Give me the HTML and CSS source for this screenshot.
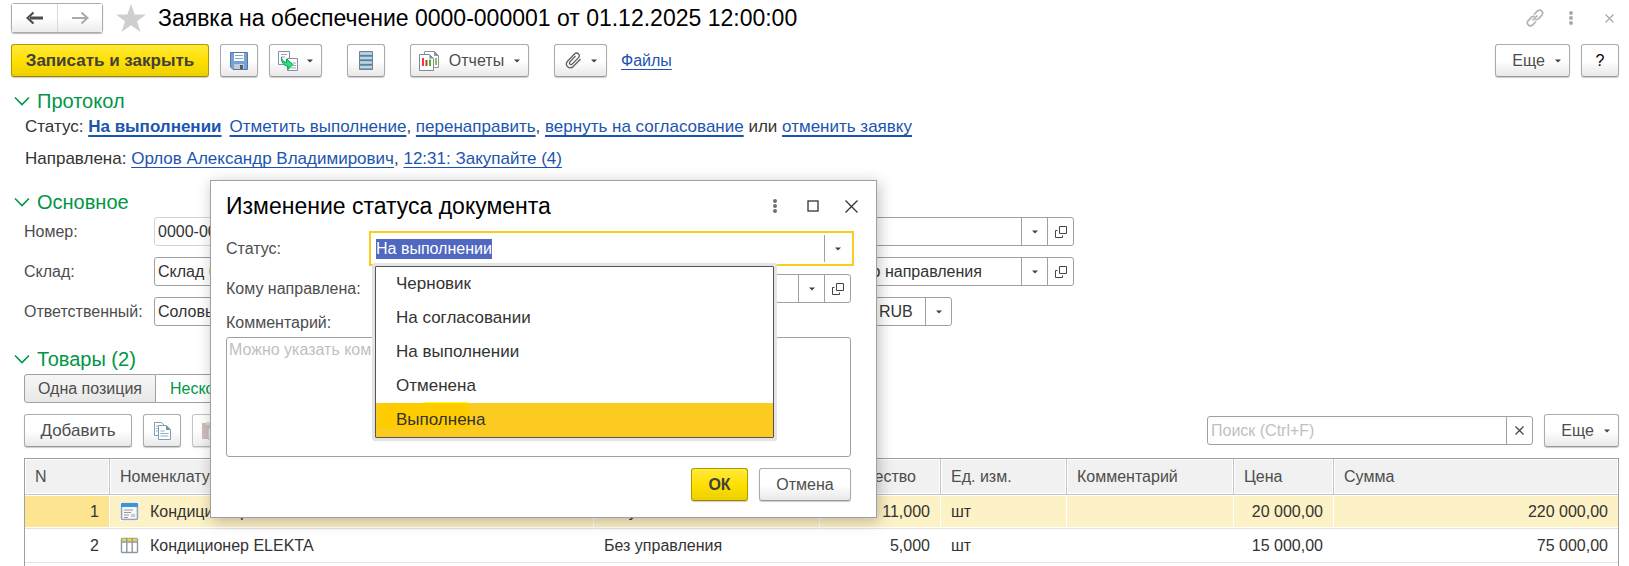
FILE: index.html
```html
<!DOCTYPE html>
<html lang="ru">
<head>
<meta charset="utf-8">
<title>Заявка на обеспечение</title>
<link rel="stylesheet" href="styles.css">
</head>
<body>
<svg class="sprite" aria-hidden="true">
  <symbol id="caret" viewBox="0 0 6 4"><path d="M0 0.5h6L3 3.5z" fill="#404040"/></symbol>
  <symbol id="open" viewBox="0 0 14 14"><path d="M5.5 1.5h7v7h-7zM3.5 5.5h-2v7h7v-2" fill="none" stroke="#444" stroke-width="1"/></symbol>
  <symbol id="chev" viewBox="0 0 16 10"><path d="M1 1.5l7 7 7-7" fill="none" stroke="#009646" stroke-width="1.6"/></symbol>
  <symbol id="dots" viewBox="0 0 4 14"><g fill="currentColor"><circle cx="2" cy="2" r="2"/><circle cx="2" cy="7" r="2"/><circle cx="2" cy="12" r="2"/></g></symbol>
</svg>
<main class="page">
  <header class="titlebar">
    <div class="history">
      <button class="hist" aria-label="Назад"><svg width="18" height="12" viewBox="0 0 18 12"><path d="M17 6H4" stroke="#4d4d4d" stroke-width="3"/><path d="M7.5 0.5L1.5 6l6 5.500" fill="none" stroke="#4d4d4d" stroke-width="2.200"/></svg></button>
      <button class="hist" aria-label="Вперед"><svg width="18" height="12" viewBox="0 0 18 12"><path d="M1 6h14" stroke="#aaa" stroke-width="2"/><path d="M10.500 0.5L16.500 6l-6 5.500" fill="none" stroke="#aaa" stroke-width="2"/></svg></button>
    </div>
    <svg class="star" width="30" height="28" viewBox="0 0 30 28"><path d="M15 0l3.700 10.500H30l-9 6.700L24.500 28 15 21.300 5.500 28 9 17.200 0 10.500h11.300z" fill="#cdcfd1"/></svg>
    <h1>Заявка на обеспечение 0000-000001 от 01.12.2025 12:00:00</h1>
    <div class="wintools">
      <button class="flat" aria-label="Ссылка"><svg width="20" height="20" viewBox="0 0 20 20" fill="none" stroke="#b3b3b3" stroke-width="1.700"><path d="M9 6.500l3.500-3.500c3-2.500 6.800 1.200 4.400 4.200l-3.400 3.600c-1 .8-2 1-3.200.6M11 13.500l-3.500 3.500c-3 2.500-6.800-1.200-4.400-4.200l3.400-3.600c1-.8 2-1 3.200-.6M7.500 12.500l5-5"/></svg></button>
      <button class="flat" aria-label="Меню"><svg width="4" height="14"><use href="#dots"/></svg></button>
      <button class="flat" aria-label="Закрыть"><svg width="9" height="9" viewBox="0 0 9 9"><path d="M.5.5l8 8M8.500.5l-8 8" stroke="#aaa" stroke-width="1.300"/></svg></button>
    </div>
  </header>

  <div class="toolbar">
    <button class="btn primary save-close">Записать и закрыть</button>
    <button class="btn icon" aria-label="Записать"><svg width="18" height="18" viewBox="0 0 18 18"><path d="M.5.5h17v17H3L.5 15z" fill="#78a3d0" stroke="#4f79a8"/><path d="M4 1h10v8H4z" fill="#fff"/><path d="M5 3.500h8M5 6.500h8" stroke="#88a5c4"/><path d="M4 12h10v5H4z" fill="#c3cdd6"/><path d="M10 13h3v4h-3z" fill="#4b5c6f"/></svg></button>
    <button class="btn icon wide" aria-label="Создать на основании"><svg width="20" height="20" viewBox="0 0 20 20"><path d="M.5.5h11v13H.5z" fill="#fff" stroke="#8292a0"/><path d="M3 3.500h6M3 6h4" stroke="#9ba8b3"/><path d="M9.500 7.500h10v12h-10z" fill="#fff" stroke="#8292a0"/><path d="M15 12h3M15 14.500h3M13 17h5" stroke="#9ba8b3"/><path d="M3.500 6c0 3 1.500 4.500 5 5.500V8l6.500 5.500-5 5v-3C5.500 14.500 3 11 3.500 6z" fill="#28e07e" stroke="#14994f"/></svg><svg width="6" height="4"><use href="#caret"/></svg></button>
    <button class="btn icon apart" aria-label="Список"><svg width="14" height="19" viewBox="0 0 14 19"><path d="M.5.5h13v18H.5z" fill="#7795ab"/><path d="M1 2.500h12M1 7h12M1 11.500h12M1 16h12" stroke="#b8d8ea" stroke-width="2.500"/><path d="M0 4.800h14M0 9.300h14M0 13.800h14" stroke="#5c7688"/><path d="M.5.5h13v18H.5z" fill="none" stroke="#6b8597"/></svg></button>
    <button class="btn apart reports"><svg width="20" height="20" viewBox="0 0 20 20"><path d="M5.500.5h10l4 4v12h-14z" fill="#fff" stroke="#8a97a3"/><path d="M15.500.5v4h4" fill="#8a97a3" stroke="#8a97a3"/><path d="M17 7v7" stroke="#8bc34a" stroke-width="2"/><path d="M.5 3.500h10l4 4v12H.5z" fill="#fff" stroke="#7c8b98"/><path d="M10.500 3.500v4h4z" fill="#7c8b98"/><path d="M4 7v8" stroke="#f33" stroke-width="2"/><path d="M7.500 9v6" stroke="#a44" stroke-width="2"/><path d="M11 8.500v6.500" stroke="#4bb82a" stroke-width="2"/></svg><span>Отчеты</span><svg width="6" height="4"><use href="#caret"/></svg></button>
    <button class="btn icon wide apart" aria-label="Присоединенные файлы"><svg width="17" height="17" viewBox="0 0 17 17" fill="none" stroke="#5e5e5e" stroke-width="1.300"><path d="M15.500 7l-7 7.200c-4 4-9.500-1-5.800-5.200l6.800-7c2.700-2.600 6.300.8 4 3.600L7.300 12c-1.600 1.500-3.700-.4-2.300-2.100L10.500 4"/></svg><svg width="6" height="4"><use href="#caret"/></svg></button>
    <a class="link files" href="#">Файлы</a>
    <div class="spacer"></div>
    <button class="btn more"><span>Еще</span><svg width="6" height="4"><use href="#caret"/></svg></button>
    <button class="btn icon help">?</button>
  </div>

  <section class="protocol">
    <h2><svg width="16" height="10"><use href="#chev"/></svg>Протокол</h2>
    <p class="line strong-line">Статус: <a class="state" href="#">На выполнении</a><a href="#">Отметить выполнение</a>, <a href="#">перенаправить</a>, <a href="#">вернуть на согласование</a> или <a href="#">отменить заявку</a></p>
    <p class="line">Направлена: <a href="#">Орлов Александр Владимирович</a>, <a href="#">12:31: Закупайте (4)</a></p>
  </section>

  <section class="general">
    <h2><svg width="16" height="10"><use href="#chev"/></svg>Основное</h2>
    <div class="fields">
      <label for="num">Номер:</label>
      <div class="field muted"><input id="num" value="0000-000001"></div>
      <div class="field"><input aria-label="Организация"><button aria-label="Выбрать"><svg width="6" height="4"><use href="#caret"/></svg></button><button aria-label="Открыть"><svg width="14" height="14"><use href="#open"/></svg></button></div>
      <label for="store">Склад:</label>
      <div class="field"><input id="store" value="Склад бытовой техники"></div>
      <div class="field"><input aria-label="Назначение" value="Без обособленного направления"><button aria-label="Выбрать"><svg width="6" height="4"><use href="#caret"/></svg></button><button aria-label="Открыть"><svg width="14" height="14"><use href="#open"/></svg></button></div>
      <label for="resp">Ответственный:</label>
      <div class="field"><input id="resp" value="Соловьева Анна"></div>
      <div class="field currency"><input aria-label="Валюта" value="RUB"><button aria-label="Выбрать"><svg width="6" height="4"><use href="#caret"/></svg></button></div>
    </div>
  </section>

  <section class="goods">
    <h2><svg width="16" height="10"><use href="#chev"/></svg>Товары (2)</h2>
    <div class="segments"><button class="seg">Одна позиция</button><button class="seg on">Несколько позиций</button></div>
    <div class="toolbar goodsbar">
      <button class="btn add">Добавить</button>
      <button class="btn icon" aria-label="Скопировать"><svg width="17" height="18" viewBox="0 0 17 18"><path d="M.5.500h7l3 3v10H.5z" fill="#fff" stroke="#7fa0b3"/><path d="M2 4h3M2 6.500h3M2 9h3" stroke="#9ab8c8"/><path d="M4.500 3.500h8l4 4v10h-12z" fill="#fff" stroke="#7fa0b3"/><path d="M12 3.500V8h4.500z" fill="#6d92a7"/><path d="M6.500 9h4M6.500 11.500h8M6.500 14h8" stroke="#8ab0c3"/></svg></button>
      <button class="btn icon" aria-label="Вставить" disabled><svg width="18" height="18" viewBox="0 0 18 18"><path d="M0 1h14v16H0z" fill="#b5a59e"/><path d="M4 0h7v3H4z" fill="#ccc"/><path d="M6.500 6.500h10v11h-10z" fill="#eee" stroke="#bbb"/></svg></button>
      <div class="spacer"></div>
      <div class="field search"><input placeholder="Поиск (Ctrl+F)" aria-label="Поиск"><button aria-label="Очистить"><svg width="9" height="9" viewBox="0 0 9 9"><path d="M.5.5l8 8M8.500.5l-8 8" stroke="#444" stroke-width="1.200"/></svg></button></div>
      <button class="btn more"><span>Еще</span><svg width="6" height="4"><use href="#caret"/></svg></button>
    </div>
    <div class="grid">
      <table>
        <colgroup><col class="c-n"><col class="c-name"><col class="c-char"><col class="c-qty"><col class="c-unit"><col class="c-note"><col class="c-price"><col></colgroup>
        <thead><tr><th>N</th><th>Номенклатура</th><th>Вариант</th><th>Количество</th><th>Ед. изм.</th><th>Комментарий</th><th>Цена</th><th>Сумма</th></tr></thead>
        <tbody>
          <tr class="current"><td class="r">1</td><td><div class="item"><svg width="19" height="19" viewBox="0 0 19 19"><rect width="19" height="19" fill="#fff"/><rect x="1.500" y="1.500" width="16" height="16" rx="1" fill="#f4f6f8" stroke="#93a3b1" stroke-width="1.600"/><path d="M1 1h17v4H1z" fill="#3f94d6"/><path d="M4 8h9M4 10.500h7M4 13h5M4 15.500h4" stroke="#9a9a9a"/><path d="M11 12h4v3h-4z" fill="#ccc"/></svg>Кондиционер</div></td><td>С пультом</td><td class="r">11,000</td><td>шт</td><td></td><td class="r">20 000,00</td><td class="r">220 000,00</td></tr>
          <tr><td class="r">2</td><td><div class="item"><svg width="19" height="17" viewBox="0 0 19 17"><rect x="1.500" y="1.500" width="16" height="14" rx="1" fill="#fff" stroke="#8a98a5" stroke-width="1.400"/><path d="M2 1.500h15v3H2z" fill="#f3d33c"/><path d="M2 5h15M6.800 1v15M12.200 1v15" stroke="#8a98a5" stroke-width="1.400"/></svg>Кондиционер ELEKTA</div></td><td>Без управления</td><td class="r">5,000</td><td>шт</td><td></td><td class="r">15 000,00</td><td class="r">75 000,00</td></tr>
        </tbody>
      </table>
    </div>
  </section>
</main>

<div class="dialog" role="dialog" aria-labelledby="dlg-title">
  <div class="dlg-head">
    <h1 id="dlg-title">Изменение статуса документа</h1>
    <button class="flat" aria-label="Меню"><svg width="4" height="14"><use href="#dots"/></svg></button>
    <button class="flat" aria-label="Развернуть"><svg width="12" height="12" viewBox="0 0 12 12"><rect x="1" y="1" width="10" height="10" fill="none" stroke="#333" stroke-width="1.300"/></svg></button>
    <button class="flat" aria-label="Закрыть"><svg width="13" height="13" viewBox="0 0 13 13"><path d="M.5.5l12 12M12.500.5l-12 12" stroke="#333" stroke-width="1.300"/></svg></button>
  </div>
  <div class="dlg-row status-row">
    <label for="status">Статус:</label>
    <div class="combo">
      <div class="field focused"><input id="status" value="На выполнении" autofocus><button aria-label="Выбрать"><svg width="6" height="4"><use href="#caret"/></svg></button></div>
      <ul class="menu" role="listbox">
        <li role="option">Черновик</li>
        <li role="option">На согласовании</li>
        <li role="option">На выполнении</li>
        <li role="option">Отменена</li>
        <li role="option" class="hover" aria-selected="true"><span>Выполнена</span></li>
      </ul>
    </div>
  </div>
  <div class="dlg-row">
    <label for="whom">Кому направлена:</label>
    <div class="field"><input id="whom"><button aria-label="Выбрать"><svg width="6" height="4"><use href="#caret"/></svg></button><button aria-label="Открыть"><svg width="14" height="14"><use href="#open"/></svg></button></div>
  </div>
  <label class="note-label" for="note">Комментарий:</label>
  <textarea id="note" placeholder="Можно указать комментарий"></textarea>
  <div class="dlg-actions">
    <button class="btn primary ok">ОК</button>
    <button class="btn cancel">Отмена</button>
  </div>
</div>
<script src="app.js"></script>
</body>
</html>
```
FILE: styles.css
```css
* { box-sizing: border-box; }

body {
  margin: 0;
  background: #fff;
  color: #333;
  font: 16px/20px "Liberation Sans", Arial, sans-serif;
}

.sprite { position: absolute; width: 0; height: 0; }
svg { display: block; flex: none; }
button, input, textarea { font: inherit; color: inherit; }
h1, h2, p, ul { margin: 0; padding: 0; font-weight: normal; }
h1 { color: #000; font-size: 23px; line-height: 28px; white-space: nowrap; }
h2 { display: flex; align-items: center; gap: 7px; padding-left: 3px; color: #009646; font-size: 20px; line-height: 24px; }

.page {
  display: flex;
  flex-direction: column;
  height: 100vh;
  overflow: hidden;
  padding: 3px 10px 0 11px;
}

/* Title */
.titlebar { display: flex; align-items: center; height: 30px; }
.history { display: flex; border: 1px solid #ababab; border-radius: 3px; box-shadow: 0 1px 1px #bbb; }
.hist {
  display: flex; align-items: center; justify-content: center;
  width: 45px; height: 28px; padding: 0; border: 0;
  background: linear-gradient(#fff 50%, #ececec);
}
.hist + .hist { border-left: 1px solid #d8d8d8; }
.star { margin: 0 12px 0 13px; }
.wintools { display: flex; align-items: center; gap: 24px; margin-left: auto; padding-right: 5px; color: #aaa; }
.flat { display: flex; padding: 0; border: 0; background: none; color: inherit; }
.wintools .flat:last-child { margin-left: 8px; }

/* Buttons */
.toolbar { display: flex; align-items: center; gap: 11px; margin-top: 11px; }
.spacer { flex: 1; }
.btn {
  display: flex; align-items: center; justify-content: center; gap: 10px;
  height: 33px; padding: 0 8px;
  border: 1px solid #ababab; border-bottom-color: #999; border-radius: 3px;
  background: linear-gradient(#fff 50%, #e9e9e9);
  box-shadow: 0 1px 1px #ccc;
  color: #4d4d4d; white-space: nowrap;
}
.btn:disabled { opacity: .7; }
.primary {
  border-color: #b09a00; border-bottom-color: #9c8900;
  background: linear-gradient(#ffe93c, #ffe000 50%, #ecd000);
  color: #404040; font-weight: bold;
}
.save-close { width: 198px; font-size: 17px; }
.icon { width: 38px; padding: 0; }
.wide { width: 53px; gap: 9px; }
.apart { margin-left: 14px; }
.reports { width: 119px; }
.more { width: 75px; padding-left: 16px; }
.help { color: #000; }
.files { margin-left: 3px; }

a { color: #1c55ae; text-decoration: underline 1px; text-underline-offset: 3px; text-decoration-skip-ink: none; }

/* Protocol */
.protocol { margin-top: 12px; }
.line { margin: 4px 0 12px 14px; font-size: 17px; white-space: nowrap; }
.line + .line { margin-bottom: 0; }
.strong-line a { text-decoration-thickness: 2px; }
.strong-line .state { margin-right: 8px; font-weight: bold; }

/* Fields */
.general { margin-top: 21px; }
.general label, .dialog label { color: #4d4d4d; white-space: nowrap; }
.fields {
  display: grid;
  grid-template-columns: 119px 360px 549px;
  column-gap: 11px; row-gap: 11px;
  align-items: center;
  justify-content: start;
  margin: 3px 0 0 13px;
}
.fields .field:nth-child(3n) { justify-self: end; width: 340px; }
.fields .currency:nth-child(3n) { width: 77px; margin-right: 122px; }
.field {
  display: flex; height: 29px; overflow: hidden;
  border: 1px solid #a0a0a0; border-radius: 3px; background: #fff;
}
.field input { flex: 1; min-width: 0; padding: 0 3px; border: 0; outline: 0; background: none; }
.field button {
  display: flex; align-items: center; justify-content: center;
  width: 26px; padding: 0; border: 0; border-left: 1px solid #a0a0a0; background: none;
}
.muted { border-color: #d4d4d4; }
::placeholder { color: #bfbfbf; opacity: 1; }

/* Goods */
.goods { display: flex; flex: 1; flex-direction: column; min-height: 0; margin-top: 21px; padding-left: 13px; }
.goods h2 { margin-left: -13px; }
.segments { display: flex; margin-top: 3px; }
.seg {
  height: 29px; padding: 0 13px; width: 132px;
  border: 1px solid #a0a0a0; border-radius: 3px 0 0 3px;
  background: linear-gradient(#f6f6f6, #e8e8e8);
  color: #4d4d4d; white-space: nowrap;
}
.seg.on { width: 172px; border-left: 0; border-radius: 0 3px 3px 0; background: #fff; color: #009646; }
.add { width: 108px; font-size: 17px; }
.search { width: 326px; }
.grid { flex: 1; min-height: 0; margin-top: 11px; overflow: hidden; border: 1px solid #a0a0a0; border-bottom: 0; }
table { width: 100%; border-collapse: separate; border-spacing: 0; table-layout: fixed; }
.c-n { width: 85px; }
.c-name { width: 484px; }
.c-char { width: 226px; }
.c-qty { width: 121px; }
.c-unit { width: 126px; }
.c-note { width: 167px; }
.c-price { width: 100px; }
th, td { padding: 0 10px; overflow: hidden; text-align: left; white-space: nowrap; }
th {
  height: 36px;
  border-right: 1px solid #c4c4c4; border-bottom: 1px solid #c4c4c4;
  background: #f1f1f1; box-shadow: inset 0 0 0 1px #fff;
  color: #4d4d4d; font-weight: normal;
}
td { height: 34px; border-bottom: 1px solid #e2e2e2; }
th:last-child { border-right: 0; }
.current td { border-right: 1px solid #fff; background: #fdf1c6; box-shadow: inset 0 1px #fff, inset 0 -1px #fff; }
.current td:first-child { background: #fde491; }
.current td:last-child { border-right: 0; }
.r { text-align: right; }
tr:not(.current) .r:not(:last-child) { padding-right: 11px; }
.item { display: flex; align-items: center; gap: 11px; }

/* Status dialog */
.dialog {
  position: absolute; top: 180px; left: 210px;
  width: 667px; padding: 10px 25px 16px 15px;
  border: 1px solid #a0a0a0; background: #fff;
  box-shadow: 2px 3px 14px rgba(0, 0, 0, .25);
}
.dlg-head { display: flex; align-items: center; gap: 30px; height: 30px; margin-right: -7px; color: #707070; }
.dlg-head h1 { flex: 1; }
.dlg-head .flat:last-child { margin-left: -4px; }
.dlg-row { display: grid; grid-template-columns: 146px 1fr; align-items: center; margin-top: 8px; }
.status-row { margin: 10px -3px 0 0; grid-template-columns: 143px 1fr; }
.combo { position: relative; }
.focused { height: 35px; padding: 2px; border: 2px solid #fbcb1f; border-radius: 0; }
.focused input { padding: 0 3px; }
.menu {
  position: absolute; z-index: 1; top: 35px; left: 6px; width: 399px;
  border: 1px solid #555; border-radius: 1px; background: #fff;
  box-shadow: 0 0 0 3px #e4e4e4;
  list-style: none; font-size: 17px;
}
.menu li { height: 34px; padding: 0 20px; line-height: 34px; }
.menu .hover { position: relative; background: #fbcb1f; }
.menu .hover::before { content: ""; position: absolute; top: 0; left: 3px; width: 90px; height: 25px; background: #fc0; }
.menu .hover::after { content: ""; position: absolute; top: -1px; left: 48px; width: 44px; height: 1px; background: #ff0; }
.menu span { position: relative; }
#status::selection { background: #5068c0; color: #fff; }
.note-label { display: block; margin-top: 10px; }
textarea {
  display: block; width: 100%; height: 120px; margin-top: 4px; padding: 2px;
  border: 1px solid #a0a0a0; border-radius: 3px; resize: none; line-height: 20px;
}
.dlg-actions { display: flex; justify-content: flex-end; gap: 11px; margin-top: 11px; }
.ok { width: 57px; }
.cancel { width: 92px; }
```
FILE: app.js
```js
const statusField = document.getElementById("status");
statusField.focus();
statusField.select();
```
